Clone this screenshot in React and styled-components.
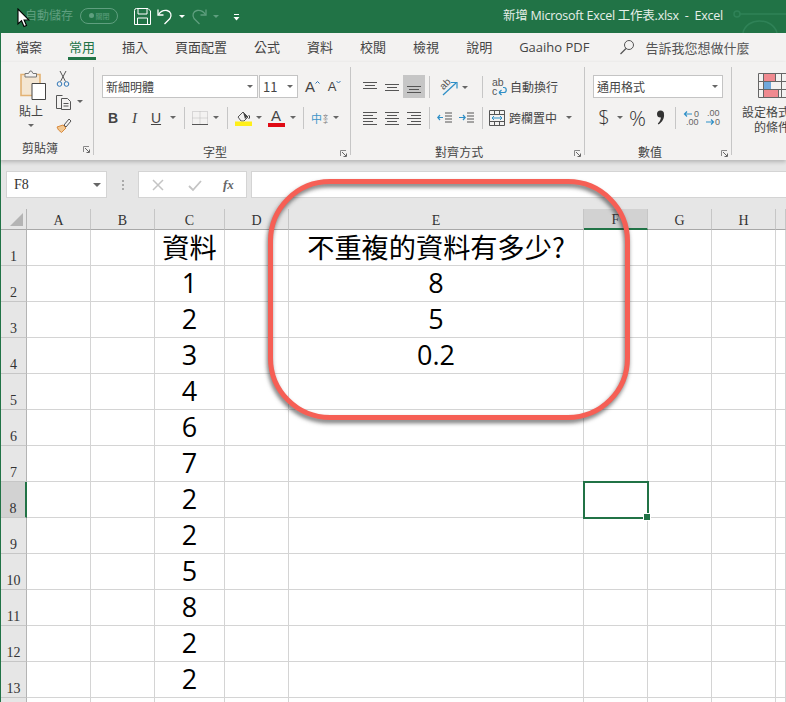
import React from 'react';
import styled, { createGlobalStyle } from 'styled-components';

const Global = createGlobalStyle`
  html, body { margin: 0; padding: 0; background: #fff; overflow: hidden; }
  * { box-sizing: border-box; }
`;
const UI = `"Noto Sans CJK TC", "Liberation Sans", sans-serif`;
const Page = styled.div`
  position: relative; width: 786px; height: 702px; overflow: hidden; background: #fff;
  display: flex; flex-direction: column; font-family: ${UI}; color: #444;
`;
const TitleBar = styled.div`
  height: 33px; flex: none; background: #217346; display: flex; align-items: center; position: relative;
  padding-left: 25px;
`;
const AutoSave = styled.span`font-size: 12px; color: #5f9f7f; width: 55px; line-height: 30px; white-space: nowrap; margin-top: -4px;`;
const Toggle = styled.span`
  width: 38px; height: 16px; border: 1px solid #5f9f7f; border-radius: 8px; color: #5f9f7f; font-size: 7px; margin-top: -2px;
  display: flex; align-items: center; justify-content: center; gap: 2px; margin-right: 13px;
  &::before { content: ''; width: 5px; height: 5px; border-radius: 50%; background: #5f9f7f; }
`;
const QuickSlot = styled.span`width: ${p => p.$w}px; height: 33px; display: flex; align-items: center; justify-content: center; flex: none;`;
const Title = styled.span`
  margin-left: auto; margin-right: 63px; margin-top: -5px; font-size: 12.5px; color: #e6efe9; white-space: pre;
  font-family: "Open Sans", "Noto Sans CJK TC", sans-serif; letter-spacing: -0.25px;
`;
const Cursor = styled.svg`position: absolute; left: 17px; top: 8px;`;
const Circuit = styled.svg`position: absolute; right: 0; top: 0;`;

const Tabs = styled.div`
  height: 29px; flex: none; background: #f3f2f1; display: flex; align-items: flex-start; gap: 27px;
  padding-left: 15px; border-left: 1px solid #217346; font-size: 13px; color: #444;
`;
const Tab = styled.div`
  height: 28px; line-height: 28px; white-space: nowrap; position: relative;
  ${p => p.$active && `color: #217346; &::after { content: ''; position: absolute; left: -1px; right: -1px; bottom: 1px; height: 3px; background: #217346; }`}
`;
const LatinTab = styled(Tab)`font-family: "Open Sans", sans-serif; font-size: 13px;`;
const SearchTab = styled.div`display: flex; align-items: center; gap: 10px; height: 28px; margin-left: 3px; white-space: nowrap; color: #555;`;

const Ribbon = styled.div`
  height: 98px; flex: none; background: #f3f2f1; display: flex; padding: 5px 0; border-left: 1px solid #217346;
  box-shadow: 0 2px 4px rgba(0,0,0,.22); position: relative; z-index: 1;
`;
const Group = styled.div`
  width: ${p => p.$w}px; flex: none; height: 88px; border-right: ${p => p.$last ? 'none' : '1px solid #c6c6c6'};
  padding: 8px 0 0 ${p => p.$pad ?? 8}px; display: flex; flex-direction: column; position: relative;
`;
const Stack = styled.div`display: flex; flex-direction: column; gap: 9px; height: 60px;`;
const Row = styled.div`display: flex; align-items: center; height: ${p => p.$h ?? 23}px; gap: ${p => p.$gap ?? 0}px;`;
const Slot = styled.span`
  width: ${p => p.$w}px; height: 22px; flex: none; display: flex; align-items: center; justify-content: center;
  ${p => p.$on && 'background: #c6c6c6; height: 23px;'}
`;
const VSep = styled.span`
  width: ${p => p.$w ?? 10}px; height: 22px; flex: none; display: flex; justify-content: center;
  &::before { content: ''; width: 1px; height: 100%; background: #c6c6c6; }
`;
const LabelRow = styled.div`
  display: flex; align-items: center; height: 16px; margin-top: ${p => p.$mt ?? 15}px; margin-left: ${p => -(p.$pad ?? 8)}px; margin-right: 3px;
`;
const GroupLabel = styled.span`font-size: 12px; color: #444; margin-left: ${p => p.$x}px; white-space: nowrap; letter-spacing: ${p => p.$ls ?? 0}px;`;
const Launcher = styled.svg`margin-left: auto; margin-top: 5px;`;
const Field = styled.div`
  width: ${p => p.$w}px; height: 23px; flex: none; background: #fff; border: 1px solid #c4c4c4; display: flex; align-items: center;
  justify-content: space-between; padding: 0 4px 0 3px; font-size: ${p => p.$fs ?? 12}px; color: #444; margin-right: ${p => p.$mr ?? 0}px; white-space: nowrap;
`;
const Caret = styled.span`
  width: 0; height: 0; border-left: 3px solid transparent; border-right: 3px solid transparent; border-top: 3px solid ${p => p.$c ?? '#666'}; flex: none;
`;
const ClipRow = styled.div`display: flex; height: 64px;`;
const PasteCol = styled.div`width: 52px; padding-left: 17px; display: flex; flex-direction: column; align-items: flex-start; margin-top: -5px;`;
const PasteText = styled.span`font-size: 12px; line-height: 14px; margin-top: 4px; width: 26px; text-align: center;`;
const PasteCaret = styled.span`width: 26px; display: flex; justify-content: center; margin-top: 6px;`;
const SmallCol = styled.div`display: flex; flex-direction: column; margin-top: -5px; gap: 6px; padding-left: 2px;`;
const SmallTool = styled.span`display: flex; align-items: center; gap: 5px; height: 17px;`;
const WrapText = styled.span`font-size: 12px; color: #444; white-space: nowrap;`;
const FontMark = styled.span`
  font-family: ${p => p.$i ? '"Liberation Serif", serif' : '"Liberation Sans", sans-serif'}; font-size: ${p => p.$i ? 15 : 14}px; font-weight: ${p => p.$b ? 700 : 400};
  font-style: ${p => p.$i ? 'italic' : 'normal'}; text-decoration: ${p => p.$u ? 'underline' : 'none'}; color: #444; line-height: 18px;
`;
const ColorA = styled.span`display: flex; flex-direction: column; align-items: center; width: 17px;`;
const ColorALetter = styled.span`font-family: "Liberation Sans", sans-serif; font-size: 15px; line-height: 14px; color: #444;`;
const ColorBar = styled.span`width: 17px; height: 4px; background: #e00a14; display: block;`;
const HanIcon = styled.span`font-size: 11px; color: #3e95c8; line-height: 16px; display: flex; align-items: center; gap: 1px;`;
const HanTiny = styled.span`font-size: 5px; line-height: 5px; color: #777; width: 5px; text-align: center;`;
const Symbol = styled.span`
  font-family: "Open Sans", sans-serif; font-size: ${p => p.$fs}px; color: #333; line-height: 22px; font-weight: 300;
`;
const GrowA = styled.span`font-family: "Liberation Sans", sans-serif; font-size: ${p => p.$fs}px; color: #444; position: relative; padding-right: 5px;`;
const CfCol = styled.div`width: 60px; display: flex; flex-direction: column; align-items: flex-start; margin-top: -2px;`;
const CfText = styled.span`font-size: 12px; line-height: 15px; width: 60px; text-align: center; white-space: nowrap; color: #444;`;
const IconText = styled.text`font-family: "Liberation Sans", sans-serif; fill: ${p => p.$c ?? '#666'};`;

const FormulaBar = styled.div`
  height: 49px; flex: none; background: #e6e6e6; display: flex; align-items: flex-start; padding: 11px 0 0 6px; border-left: 1px solid #217346;
`;
const NameBox = styled.div`
  width: 101px; height: 27px; background: #fff; border: 1px solid #d4d4d4; display: flex; align-items: center; justify-content: space-between;
  padding: 0 5px 0 7px; font-family: "Liberation Serif", serif; font-size: 14px; color: #333; margin-left: -1px;
`;
const Dots = styled.span`
  width: 31px; height: 27px; display: flex; flex-direction: column; align-items: center; justify-content: center; gap: 2px;
  & i { width: 2px; height: 2px; background: #aaa; display: block; }
`;
const FxBox = styled.div`width: 109px; height: 27px; background: #fff; border: 1px solid #d4d4d4; display: flex; align-items: center; padding-left: 12px;`;
const Fx = styled.span`font-family: "Liberation Serif", serif; font-style: italic; font-weight: 700; font-size: 13px; color: #666; margin-left: 20px;`;
const Input = styled.div`flex: 1; height: 27px; background: #fff; border: 1px solid #d4d4d4; border-right: none; margin-left: 4px;`;

const Sheet = styled.div`
  flex: 1; display: grid; position: relative; border-left: 1px solid #217346; overflow: hidden;
  grid-template-columns: 26px 64px 64px 70px 64px 295px 64px 64px 64px 1fr;
  grid-auto-rows: 36px; grid-template-rows: 21px;
`;
const Corner = styled.div`background: #e6e6e6; border-right: 1px solid #b4b4b4; border-bottom: 1px solid #a8a8a8; display: flex; align-items: flex-end; justify-content: flex-end; padding: 0 3px 3px 0;`;
const ColHead = styled.div`
  background: ${p => p.$sel ? '#d2d2d2' : '#e6e6e6'}; border-right: 1px solid #c6c6c6;
  border-bottom: ${p => p.$sel ? '2px solid #217346' : '1px solid #a8a8a8'};
  font-family: "Liberation Serif", serif; font-size: 14px; color: #333; display: flex; justify-content: center; align-items: center; padding-top: 3px;
`;
const RowHead = styled.div`
  background: ${p => p.$sel ? '#d2d2d2' : '#e6e6e6'}; border-bottom: 1px solid #c6c6c6;
  border-right: ${p => p.$sel ? '2px solid #217346' : '1px solid #b4b4b4'};
  font-family: "Liberation Serif", serif; font-size: 14px; color: #333; display: flex; justify-content: center; align-items: flex-end;
`;
const Cell = styled.div`
  border-right: 1px solid #d4d4d4; border-bottom: 1px solid #d4d4d4; display: flex; justify-content: center; align-items: center; color: #000;
  font-family: ${p => p.$cjk ? `"Noto Sans CJK TC", sans-serif` : `"Open Sans", sans-serif`}; font-size: ${p => p.$cjk ? 27.2 : 27}px;
  font-weight: ${p => p.$cjk ? 400 : 500}; white-space: nowrap; position: relative; line-height: 32px; padding-bottom: ${p => p.$cjk ? 3 : 2}px;
  ${p => p.$active && `outline: 2px solid #217346; outline-offset: -1px; z-index: 2;
    &::after { content: ''; position: absolute; right: -4px; bottom: -4px; width: 6px; height: 6px; background: #217346; border: 1px solid #fff; }`}
`;
const Callout = styled.div`
  position: absolute; left: 268px; top: 179px; width: 362px; height: 241px; border: 5px solid #f65f55; border-radius: 62px;
  filter: drop-shadow(-1px 3px 2px rgba(40,40,40,.65)); z-index: 5;
`;

const S = ({ w = 16, h = 16, children, ...r }) => <svg width={w} height={h} viewBox={`0 0 ${w} ${h}`} fill="none" {...r}>{children}</svg>;
const Lines = ({ rows, c = '#555' }) => <S w={16} h={16}>{rows.map(([x1, x2, y], i) => <path key={i} d={`M${x1} ${y}.5H${x2}`} stroke={c} />)}</S>;
const Launch = () => <Launcher width="7" height="7" viewBox="0 0 7 7" fill="none"><path d="M.5 6V.5H6" stroke="#888" /><path d="M2 2l4 4M3.500 6.500h3v-3" stroke="#666" /></Launcher>;

const cols = ['A', 'B', 'C', 'D', 'E', 'F', 'G', 'H', 'I'];
const colC = ['資料', 1, 2, 3, 4, 6, 7, 2, 2, 5, 8, 2, 2, ''];
const colE = ['不重複的資料有多少?', 8, 5, 0.2];

export default function App() {
  return (
    <Page>
      <Global />
      <TitleBar>
        <AutoSave>自動儲存</AutoSave>
        <Toggle>關閉</Toggle>
        <QuickSlot $w={22}>
          <S w={17} h={17}><path d="M.5 2.500a2 2 0 0 1 2-2h11.500l2.500 2.500v13.500H.5z" stroke="#fff" /><path d="M4 .5v5.500h9V.5M3.500 16.500v-6.500h10v6.500" stroke="#fff" /></S>
        </QuickSlot>
        <QuickSlot $w={24}>
          <S w={16} h={17}><path d="M1 1.500v5.500h5.500" stroke="#fff" strokeWidth="1.300" /><path d="M1.500 6.500C3.500 3.500 7 2 10 2.500c4 .7 5 5 3 8L7.500 16" stroke="#fff" strokeWidth="1.300" /></S>
        </QuickSlot>
        <QuickSlot $w={10}><Caret $c="#fff" /></QuickSlot>
        <QuickSlot $w={24}>
          <S w={16} h={17}><path d="M15 1.500v5.500H9.500" stroke="#5f9f7f" strokeWidth="1.300" /><path d="M14.500 6.500C12.500 3.500 9 2 6 2.500c-4 .7-5 5-3 8L8.500 16" stroke="#5f9f7f" strokeWidth="1.300" /></S>
        </QuickSlot>
        <QuickSlot $w={10}><Caret $c="#5f9f7f" /></QuickSlot>
        <QuickSlot $w={30}>
          <S w={7} h={8}><path d="M1 1.500h5" stroke="#fff" /><path d="M.5 4h6L3.500 7.500z" fill="#fff" /></S>
        </QuickSlot>
        <Title>新增 Microsoft Excel 工作表.xlsx  -  Excel</Title>
        <Cursor width="13" height="20" viewBox="0 0 13 20"><path d="M1 1v15l3.500-3.300L7 18.500l2.500-1-2.400-5.500H12z" fill="#fff" stroke="#000" strokeWidth="1.100" /></Cursor>
        <Circuit width="56" height="33" viewBox="0 0 56 33" fill="none">
          <circle cx="7" cy="14" r="3" stroke="#2f8257" strokeWidth="1.500" />
          <path d="M10 14h46M13 33c3-16 30-16 34 0" stroke="#2f8257" strokeWidth="1.500" />
        </Circuit>
      </TitleBar>

      <Tabs>
        <Tab>檔案</Tab>
        <Tab $active>常用</Tab>
        <Tab>插入</Tab>
        <Tab>頁面配置</Tab>
        <Tab>公式</Tab>
        <Tab>資料</Tab>
        <Tab>校閱</Tab>
        <Tab>檢視</Tab>
        <Tab>說明</Tab>
        <LatinTab>Gaaiho PDF</LatinTab>
        <SearchTab>
          <S w={16} h={16}><circle cx="10" cy="6" r="4.500" stroke="#555" /><path d="M7 9.500L1.500 15" stroke="#555" strokeWidth="1.200" /></S>
          <span>告訴我您想做什麼</span>
        </SearchTab>
      </Tabs>

      <Ribbon>
        <Group $w={93} $pad={0}>
          <ClipRow>
            <PasteCol>
              <svg width="28" height="30" viewBox="0 0 28 30" fill="none">
                <path d="M3 4.500h19v21H3z" fill="#f4e6d2" stroke="#e3b274" strokeWidth="1.600" />
                <path d="M7 5.500V3.500h3.500L12 1h1.500L15 3.500h3.500v3.500H7z" fill="#f3f2f1" stroke="#777" />
                <path d="M14 13.500h13.500v16H14z" fill="#fff" stroke="#444" />
              </svg>
              <PasteText>貼上</PasteText>
              <PasteCaret><Caret /></PasteCaret>
            </PasteCol>
            <SmallCol>
              <SmallTool>
                <S w={16} h={18}><path d="M5 1l5.500 10.500M11 1L5.500 11.500" stroke="#555" /><circle cx="4.500" cy="14" r="2.300" stroke="#2e75b6" /><circle cx="11.500" cy="14" r="2.300" stroke="#2e75b6" /></S>
              </SmallTool>
              <SmallTool>
                <S w={17} h={16}><path d="M6 14.500H1.500v-13h6" stroke="#555" /><path d="M6.500 4.500h6l3 3v8h-9zM8.500 9.500h5M8.500 12h5" stroke="#555" /></S>
                <Caret />
              </SmallTool>
              <SmallTool>
                <S w={17} h={16}><path d="M8 8L2 10l1.500 3 3 2.500L11 11z" fill="#f2c892" stroke="#d98a3d" /><path d="M9 8l5-6 2 2-5 6z" stroke="#555" /></S>
              </SmallTool>
            </SmallCol>
          </ClipRow>
          <LabelRow $pad={0} $mt={0}>
            <GroupLabel $x={21}>剪貼簿</GroupLabel>
            <Launch />
          </LabelRow>
        </Group>

        <Group $w={257}>
          <Stack>
            <Row>
              <Field $w={156} $mr={1}>新細明體<Caret /></Field>
              <Field $w={39} $fs={13} $mr={5}>11<Caret /></Field>
              <Slot $w={19}><GrowA $fs={15}>A<S w={5} h={4} style={{ position: 'absolute', right: 0, top: 2 }}><path d="M.5 3.500l2-2 2 2" stroke="#2e75b6" /></S></GrowA></Slot>
              <Slot $w={3} />
              <Slot $w={19}><GrowA $fs={13}>A<S w={5} h={4} style={{ position: 'absolute', right: 0, top: 1 }}><path d="M.5 1l2 2 2-2" stroke="#2e75b6" /></S></GrowA></Slot>
            </Row>
            <Row $h={21}>
              <Slot $w={22}><FontMark $b>B</FontMark></Slot>
              <Slot $w={21}><FontMark $i>I</FontMark></Slot>
              <Slot $w={22}><FontMark $u>U</FontMark></Slot>
              <Slot $w={12}><Caret /></Slot>
              <VSep />
              <Slot $w={21}><S w={16} h={16}><path d="M.5 1.500h15v13H.5zM8 1.500v13M.5 8h15" stroke="#bbb" strokeDasharray="1 1" /><path d="M0 14.500h16" stroke="#555" /></S></Slot>
              <Slot $w={12}><Caret /></Slot>
              <VSep />
              <Slot $w={22}><S w={17} h={17}><path d="M3 8l5-5 5 5-4 4H6z" stroke="#555" /><path d="M8 3l4.500 4.500L10 10z" fill="#444" /><path d="M13.500 6c1.500 1 1.500 3 0 4" stroke="#444" /><rect y="12.500" width="17" height="4.500" fill="#ffef1a" /></S></Slot>
              <Slot $w={10}><Caret /></Slot>
              <Slot $w={24}><ColorA><ColorALetter>A</ColorALetter><ColorBar /></ColorA></Slot>
              <Slot $w={10}><Caret /></Slot>
              <VSep />
              <Slot $w={23}><HanIcon>中<HanTiny>文<br />字</HanTiny></HanIcon></Slot>
              <Slot $w={9}><Caret /></Slot>
            </Row>
          </Stack>
          <LabelRow>
            <GroupLabel $x={109}>字型</GroupLabel>
            <Launch />
          </LabelRow>
        </Group>

        <Group $w={234}>
          <Stack>
            <Row>
              <Slot $w={22}><Lines rows={[[1, 15, 3], [3, 13, 6], [1, 15, 9]]} /></Slot>
              <Slot $w={22}><Lines rows={[[1, 15, 5], [3, 13, 8], [1, 15, 11]]} /></Slot>
              <Slot $w={22} $on><Lines rows={[[1, 15, 7], [3, 13, 10], [1, 15, 13]]} /></Slot>
              <VSep $w={8} />
              <Slot $w={40}>
                <S w={32} h={20}>
                  <IconText x="4" y="11" fontSize="10" transform="rotate(-45 8 9)" $c="#555">ab</IconText>
                  <path d="M6 18L19 6" stroke="#2e8fc7" strokeWidth="1.200" /><path d="M14 5.500h6v6" stroke="#2e8fc7" strokeWidth="1.200" />
                  <path d="M25 9h6l-3 3z" fill="#666" />
                </S>
              </Slot>
              <VSep $w={18} />
              <Row $gap={2}>
                <S w={17} h={20}>
                  <IconText x="1" y="9" fontSize="10.500" $c="#555">ab</IconText>
                  <IconText x="1" y="18" fontSize="10.500" $c="#555">c</IconText>
                  <path d="M8 15.500h5c3 0 3-5 0-5h-1M8 15.500l2.500-2.500M8 15.500l2.500 2.500" stroke="#2e8fc7" strokeWidth="1.200" />
                </S>
                <WrapText>自動換行</WrapText>
              </Row>
            </Row>
            <Row $h={21}>
              <Slot $w={22}><Lines rows={[[1, 15, 2], [1, 11, 5], [1, 15, 8], [1, 11, 11], [1, 15, 14]]} /></Slot>
              <Slot $w={22}><Lines rows={[[1, 15, 2], [3, 13, 5], [1, 15, 8], [3, 13, 11], [1, 15, 14]]} /></Slot>
              <Slot $w={22}><Lines rows={[[1, 15, 2], [5, 15, 5], [1, 15, 8], [5, 15, 11], [1, 15, 14]]} /></Slot>
              <VSep $w={8} />
              <Slot $w={23}><S w={16} h={16}><path d="M8 3h7M8 6h7M8 9h7M8 12h7" stroke="#555" /><path d="M6 7.500H1M3 5L.8 7.500 3 10" stroke="#2e8fc7" strokeWidth="1.200" /></S></Slot>
              <Slot $w={22}><S w={16} h={16}><path d="M8 3h7M8 6h7M8 9h7M8 12h7" stroke="#555" /><path d="M0 7.500h6M4 5l2.200 2.500L4 10" stroke="#2e8fc7" strokeWidth="1.200" /></S></Slot>
              <VSep $w={8} />
              <Slot $w={21}><S w={16} h={16}><path d="M.5.500h15v15H.5zM.5 4.500h15M.5 11.500h15M5.500.500v4M10.500.500v4M5.500 11.500v4M10.500 11.500v4" stroke="#555" /><path d="M3 8h10M5 6L3 8l2 2M11 6l2 2-2 2" stroke="#2e8fc7" /></S></Slot>
              <Slot $w={2} />
              <WrapText>跨欄置中</WrapText>
              <Slot $w={24}><Caret /></Slot>
            </Row>
          </Stack>
          <LabelRow>
            <GroupLabel $x={84} $ls={.1}>對齊方式</GroupLabel>
            <Launch />
          </LabelRow>
        </Group>

        <Group $w={147}>
          <Stack>
            <Row>
              <Field $w={130}>通用格式<Caret /></Field>
            </Row>
            <Row $h={21}>
              <Slot $w={22}><Symbol $fs={20}>$</Symbol></Slot>
              <Slot $w={10}><Caret /></Slot>
              <Slot $w={25}><Symbol $fs={21}>%</Symbol></Slot>
              <Slot $w={20}>
                <S w={9} h={15}><circle cx="4.500" cy="4" r="3.500" fill="#333" /><path d="M8 4c.5 4-1.500 8-5.500 10.500l-.7-1C4 11.500 5 9 5 6.500z" fill="#333" /></S>
              </Slot>
              <VSep />
              <Slot $w={23}>
                <S w={18} h={18}>
                  <path d="M9 5H1.500M4 2.500L1.500 5 4 7.500" stroke="#2e8fc7" strokeWidth="1.200" />
                  <IconText x="11" y="8" fontSize="9">0</IconText>
                  <IconText x="3" y="16" fontSize="9">.00</IconText>
                </S>
              </Slot>
              <Slot $w={20}>
                <S w={18} h={18}>
                  <IconText x="3" y="7" fontSize="9">.00</IconText>
                  <path d="M2 13h7.500M7 10.500L9.500 13 7 15.500" stroke="#2e8fc7" strokeWidth="1.200" />
                  <IconText x="11" y="16" fontSize="9">0</IconText>
                </S>
              </Slot>
            </Row>
          </Stack>
          <LabelRow>
            <GroupLabel $x={53}>數值</GroupLabel>
            <Launch />
          </LabelRow>
        </Group>

        <Group $w={54} $last $pad={10}>
          <CfCol>
            <S w={28} h={25} style={{ marginBottom: 6, marginLeft: 16, flex: 'none' }}>
              <rect x="5" y="1" width="12" height="7" fill="#f08a90" />
              <rect x="5" y="9" width="8" height="7" fill="#6fa8dc" />
              <rect x="5" y="17" width="15" height="7" fill="#f08a90" />
              <path d="M.5.500h28v24H.5zM5.500.500v24M17.500.500v8M20.500 16.500v8M23.500.500v24M.5 8.500h28M.5 16.500h28" stroke="#666" />
            </S>
            <CfText>設定格式化</CfText>
            <CfText>的條件</CfText>
          </CfCol>
        </Group>
      </Ribbon>

      <FormulaBar>
        <NameBox>F8<Caret style={{ borderLeftWidth: 4, borderRightWidth: 4, borderTopWidth: 4 }} /></NameBox>
        <Dots><i /><i /><i /></Dots>
        <FxBox>
          <S w={14} h={14}><path d="M2 2l10 10M12 2L2 12" stroke="#c4c4c4" strokeWidth="1.500" /></S>
          <S w={16} h={14} style={{ marginLeft: 22 }}><path d="M2 8l4 4 8-9" stroke="#c4c4c4" strokeWidth="1.800" /></S>
          <Fx>fx</Fx>
        </FxBox>
        <Input />
      </FormulaBar>

      <Sheet>
        <Corner><S w={13} h={13}><path d="M13 0v13H0z" fill="#b4b4b4" /></S></Corner>
        {cols.map(c => <ColHead key={c} $sel={c === 'F'}>{c === 'I' ? '' : c}</ColHead>)}
        {colC.map((v, r) => (
          <React.Fragment key={r}>
            <RowHead $sel={r === 7}>{r === 13 ? '' : r + 1}</RowHead>
            {cols.map(c => (
              <Cell key={c} $active={c === 'F' && r === 7} $cjk={(c === 'C' || c === 'E') && r === 0}>
                {c === 'C' ? v : c === 'E' ? colE[r] : ''}
              </Cell>
            ))}
          </React.Fragment>
        ))}
      </Sheet>
      <Callout />
    </Page>
  );
}
